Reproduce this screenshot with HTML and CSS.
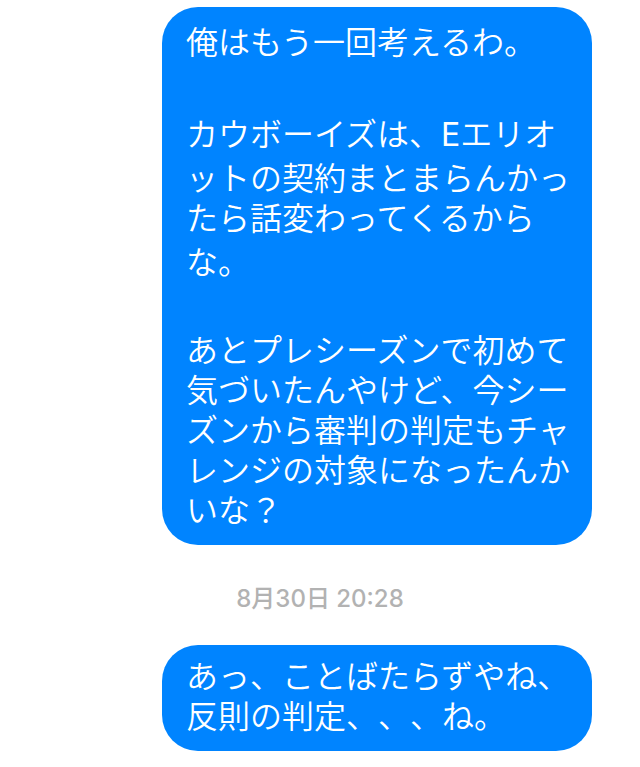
FILE: index.html
```html
<!DOCTYPE html>
<html lang="ja">
<head>
    <meta charset="UTF-8">
    <meta name="viewport" content="width=device-width, initial-scale=1.0">
    <title>メッセージ</title>
    <link rel="stylesheet" href="styles.css">
</head>
<body>
    <main class="chat">
        <div class="bubble">
            <p>
                <span class="line tall">俺はもう一回考えるわ。</span>
            </p>
            <p>
                <span class="line tall">カウボーイズは、<span class="latin">E</span>エリオ</span>
                <span class="line tall">ットの契約まとまらんかっ</span>
                <span class="line">たら話変わってくるから</span>
                <span class="line tall">な。</span>
            </p>
            <p>
                <span class="line">あとプレシーズンで初めて</span>
                <span class="line">気づいたんやけど、今シー</span>
                <span class="line">ズンから審判の判定もチャ</span>
                <span class="line">レンジの対象になったんか</span>
                <span class="line">いな？</span>
            </p>
        </div>
        <time class="timestamp" datetime="08-30T20:28">8月30日 20:28</time>
        <div class="bubble">
            <p>
                <span class="line">あっ、ことばたらずやね、</span>
                <span class="line">反則の判定、、、ね。</span>
            </p>
        </div>
    </main>
</body>
</html>
```

FILE: styles.css
```css
body {
    margin: 0;
    background-color: #fff;
    font-family: Inter, "Noto Sans CJK JP", sans-serif;
}

.chat {
    display: flex;
    flex-direction: column;
    padding: 7px 48px 16px 162px;
}

.bubble {
    display: flex;
    flex-direction: column;
    gap: 48px;
    padding: 12px 24px 14px;
    border-radius: 36px;
    background-color: #0084ff;
    color: #fff;
    font-size: 32px;
    font-weight: 350;
    line-height: 40px;
    white-space: nowrap;
    text-spacing-trim: space-all;
}

.bubble p {
    margin: 0;
}

.line {
    display: block;
}

.tall {
    padding-top: 4px;
}

.latin {
    font-weight: 400;
}

/* centred on the screen, not on the bubble column */
.timestamp {
    margin: 40px 0 32px -114px;
    color: #b2b2b2;
    font-size: 24px;
    font-weight: 500;
    line-height: 28px;
    text-align: center;
}
```
